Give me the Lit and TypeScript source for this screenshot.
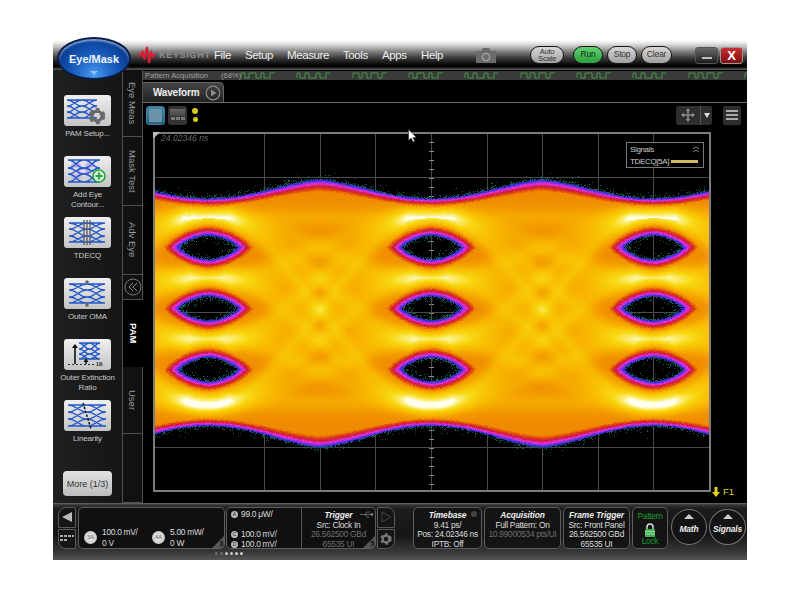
import { LitElement, html, css, svg } from "lit";
import { customElement } from "lit/decorators.js";

const curve = (x0: number, x1: number, a: number, b: number) => {
  const m = (x0 + x1) / 2;
  return `M${x0} ${a}C${m} ${a} ${m} ${b} ${x1} ${b}`;
};
const eyeD = (x0: number, x1: number, ys: number[]) => {
  const m = (x0 + x1) / 2;
  let d = "";
  for (const [p, q] of [[x0, m], [m, x1]]) {
    ys.forEach((a, i) => {
      ys.forEach((b, j) => {
        if (Math.abs(i - j) === 1 || (i === j && (i === 0 || i === ys.length - 1))) d += curve(p, q, a, b);
      });
    });
  }
  return d;
};
const eyePath = (x0: number, x1: number, ys: number[]) =>
  svg`<path d=${eyeD(x0, x1, ys)} fill="none" stroke="#2358c6" stroke-width="1.5"/>`;
const gear = (cx: number, cy: number, r: number, col: string) => svg`
  <circle cx=${cx} cy=${cy} r=${r} fill="none" stroke=${col} stroke-width=${r * 0.55} stroke-dasharray=${`${r * 0.55} ${r * 0.55}`}/>
  <circle cx=${cx} cy=${cy} r=${r * 0.75} fill="none" stroke=${col} stroke-width=${r * 0.5}/>`;

const icons: Record<string, unknown> = {
  setup: svg`${eyePath(3, 33, [5, 11, 17, 23])}${gear(33, 21, 6.5, "#6a6a6a")}`,
  contour: svg`<ellipse cx="12" cy="9" rx="5" ry="3" fill="#c9b5e8"/><ellipse cx="19" cy="15" rx="7" ry="4" fill="#bba4e4"/><ellipse cx="19" cy="15" rx="3" ry="1.6" fill="#e4e2f0"/><ellipse cx="26" cy="9" rx="5" ry="3" fill="#c9b5e8"/><ellipse cx="12" cy="21" rx="5" ry="3" fill="#c9b5e8"/>
    ${eyePath(4, 36, [4, 12, 18, 26])}<circle cx="35" cy="20" r="6" fill="#dfe8df" stroke="#22a83c" stroke-width="1.6"/><path d="M35 16.5v7M31.5 20h7" stroke="#22a83c" stroke-width="2"/>`,
  tdecq: svg`${eyePath(5, 41, [6, 12, 19, 25])}<path d="M20 3v25M23 3v25M26 3v25" stroke="#5a5a62" stroke-width="1.3"/>`,
  oma: svg`${eyePath(5, 41, [6, 12, 19, 25])}<circle cx="23" cy="4" r="1.8" fill="#64666e"/><circle cx="23" cy="27" r="1.8" fill="#64666e"/>`,
  ext: svg`${eyePath(15, 36, [4, 10, 15, 20])}<path d="M11 25V6" stroke="#111" stroke-width="1.6"/><path d="M8 9l3-4 3 4z" fill="#111"/><path d="M22 25v-3" stroke="#111" stroke-width="1.5"/><path d="M19.5 23l2.5-3.5 2.5 3.5z" fill="#111"/><path d="M4 25.5h27" stroke="#333" stroke-dasharray="2 2"/><text x="32" y="27" font-size="5" font-weight="700" font-family="Liberation Sans" fill="#222">1/0</text>`,
  lin: svg`${eyePath(4, 42, [5, 12, 19, 26])}<path d="M19 3l8 26" stroke="#111" stroke-width="1.5" stroke-dasharray="2.5 1.5"/>`,
};

const side = [
  { icon: "setup", label: ["PAM Setup..."] },
  { icon: "contour", label: ["Add Eye", "Contour..."] },
  { icon: "tdecq", label: ["TDECQ"] },
  { icon: "oma", label: ["Outer OMA"] },
  { icon: "ext", label: ["Outer Extinction", "Ratio"] },
  { icon: "lin", label: ["Linearity"] },
];

const wavePath = () => {
  let d = "";
  const pats = [[4, 4, 7, 5, 3, 6, 5], [3, 5, 4, 7, 4, 6, 4], [6, 3, 5, 4, 7, 4, 5]];
  let k = 0;
  for (let g = 98; g < 604; g += 56) {
    const p = pats[k++ % 3];
    let x = g;
    let up = false;
    d += `M${x} 7`;
    for (const w of p) {
      d += up ? `V7` : `V2`;
      up = !up;
      x += w;
      if (x > g + 37) x = g + 37;
      d += `H${x}`;
    }
  }
  return d;
};

const stops: [number, number, number, number][] = [
  [0.03, 22, 110, 78],
  [0.12, 42, 48, 205],
  [0.2, 122, 48, 240],
  [0.3, 240, 48, 208],
  [0.4, 200, 24, 72],
  [0.5, 224, 64, 16],
  [0.6, 240, 138, 0],
  [0.72, 248, 184, 0],
  [0.85, 248, 216, 16],
  [0.95, 251, 239, 128],
  [1, 255, 255, 240],
];
const cmap = (t: number): [number, number, number] => {
  if (t <= stops[0][0]) return [stops[0][1], stops[0][2], stops[0][3]];
  for (let i = 1; i < stops.length; i++) {
    if (t <= stops[i][0]) {
      const a = stops[i - 1], b = stops[i];
      const f = (t - a[0]) / (b[0] - a[0]);
      return [a[1] + (b[1] - a[1]) * f, a[2] + (b[2] - a[2]) * f, a[3] + (b[3] - a[3]) * f];
    }
  }
  return [255, 255, 240];
};

function drawEye(c: HTMLCanvasElement) {
  const W = c.width, H = c.height;
  const ox = 155, oy = 134;
  const g = c.getContext("2d")!;
  g.fillStyle = "#000";
  g.fillRect(0, 0, W, H);
  g.strokeStyle = "#4a4a4a";
  g.lineWidth = 1;
  for (let k = -3; k <= 5; k++) {
    const x = Math.round(431 + 55.6 * k) + 0.5 - ox;
    g.beginPath(); g.moveTo(x, 0); g.lineTo(x, H); g.stroke();
  }
  for (let k = 1; k < 8; k++) {
    const y = 132 + 45 * k + 0.5 - oy;
    g.beginPath(); g.moveTo(0, y); g.lineTo(W, y); g.stroke();
  }
  g.fillStyle = "#8a8a8a";
  for (let y = 133; y < 492; y += 9) g.fillRect(429 - ox, y - oy, 5, 1);

  const img = g.getImageData(0, 0, W, H);
  const px = img.data;
  let seed = 12345;
  const rnd = () => {
    seed |= 0; seed = (seed + 0x6d2b79f5) | 0;
    let t = Math.imul(seed ^ (seed >>> 15), 1 | seed);
    t = (t + Math.imul(t ^ (t >>> 7), 61 | t)) ^ t;
    return ((t ^ (t >>> 14)) >>> 0) / 4294967296;
  };
  const P = 222.5, X0 = 208;
  const L = [217, 278, 339, 402];
  const LA = [0.24, 0.1, 0.1, 0.24];
  const eyesY = [247, 308, 369];
  const eyesX = [208, 431, 653];
  for (let iy = 0; iy < H; iy++) {
    const y = iy + oy;
    for (let ix = 0; ix < W; ix++) {
      const x = ix + ox;
      const u = (((x - X0) % P) + P) % P / P;
      const cs = Math.pow(Math.abs(Math.cos(Math.PI * u)), 1.5);
      const top = 179 + 19 * cs;
      const bot = 447 - 21.5 * cs;
      let d = Math.min(y - top, bot - y);
      let scale = 20 - 8 * cs;
      for (const ex of eyesX) {
        if (Math.abs(x - ex) > 90) continue;
        for (const ey of eyesY) {
          const dx = Math.abs(x - ex) / 29, dy = Math.abs(y - ey) / 12;
          const r = Math.pow(dx, 1.7) + Math.pow(dy, 1.3);
          const de = (r - 1) * 9;
          if (de < d) { d = de; scale = 16; }
        }
      }
      const n = (rnd() - 0.5) * 1.5;
      const dn = d + n;
      const i = (iy * W + ix) * 4;
      if (dn < 0) {
        const p = Math.exp(dn / 1.6) * 0.7;
        if (rnd() < p) {
          const col = rnd() < 0.3 && dn > -1.5 ? [40, 60, 190] : [24, 120, 88];
          const a = 0.55 + rnd() * 0.4;
          px[i] = col[0] * a; px[i + 1] = col[1] * a; px[i + 2] = col[2] * a;
        }
        continue;
      }
      const ramp = 0.08 + 1.15 * (1 - Math.exp(-dn / scale));
      let sum = 0;
      const ss = 0.5 - 0.5 * Math.cos(Math.PI * u);
      for (let a = 0; a < 4; a++) {
        for (let b = 0; b < 4; b++) {
          const ty = L[a] + (L[b] - L[a]) * ss;
          const e = (y - ty) / 11;
          sum += Math.exp(-e * e);
        }
      }
      const bb = Math.min(sum / 4, 1);
      let spot = 0;
      for (const ex of eyesX) {
        const ex2 = (x - ex + 2) / 27;
        if (Math.abs(ex2) > 4) continue;
        for (let a = 0; a < 4; a++) {
          const e2 = (y - L[a]) / 9;
          spot += LA[a] * Math.exp(-ex2 * ex2 - e2 * e2);
        }
      }
      const body = 0.6 + 0.3 * bb + spot + (rnd() - 0.5) * 0.012;
      const t = Math.min(ramp, body);
      const [r, gg, bl] = cmap(t);
      px[i] = r; px[i + 1] = gg; px[i + 2] = bl;
    }
  }
  g.putImageData(img, 0, 0);
}

@customElement("app-root")
export class AppRoot extends LitElement {
  static styles = css`
    :host { display: block; width: 800px; height: 600px; background: #fff; padding: 40px 53px 0; box-sizing: border-box; font-family: "Liberation Sans", Arial, sans-serif; overflow: hidden; position: relative; }
    .win { width: 694px; height: 520px; display: flex; flex-direction: column; background: #000; position: relative; }
    .top { height: 30px; flex: none; display: flex; align-items: center; padding: 0 4px 0 85px; box-sizing: border-box; color: #eee;
      background: linear-gradient(#fff 0, #e8e8e8 3px, #bdbdbd 7px, #7a7a7a 12px, #3a3a3a 18px, #0c0c0c 24px, #000 27px, #333 28px, #5a5a5a 30px); }
    .orb { position: absolute; left: 4px; top: -3px; width: 74px; height: 43px; border-radius: 50%; box-sizing: border-box; border: 2px solid #0a1d45; background: radial-gradient(ellipse at 50% 95%, #4c9cf0 0, #1f66c8 35%, #0e46a0 65%, #062c72 100%); display: flex; align-items: center; justify-content: center; color: #eef4ff; font-weight: 700; font-size: 11px; overflow: hidden; z-index: 3; box-shadow: inset 0 2px 2px #7f9fd0; }
    .orb::after { content: ""; position: absolute; left: 31px; bottom: 3px; width: 0; height: 0; border: 4px solid transparent; border-top: 4px solid #8fc2f5; border-bottom: 0; }
    .logo { width: 18px; height: 18px; flex: none; }
    .brand { font-size: 9px; letter-spacing: .7px; color: #8e8e8e; margin: 0 10px 0 3px; width: 45px; white-space: nowrap; font-weight: 700; }
    .menu { display: flex; font-size: 11.5px; letter-spacing: -.4px; white-space: nowrap; }
    .menu span { display: block; }
    .mi1 { width: 31px; } .mi2 { width: 42px; } .mi3 { width: 56px; } .mi4 { width: 39px; } .mi5 { width: 39px; } .mi6 { width: 33px; }
    .cam { width: 22px; height: 17px; margin-left: 21px; flex: none; }
    .pills { display: flex; margin-left: 33px; gap: 4px; }
    .pill { height: 18px; border-radius: 9px; border: 1px solid #161616; box-sizing: border-box; background: linear-gradient(#d8d8d8, #a0a0a0); color: #333; font-size: 8.5px; letter-spacing: -.2px; display: flex; align-items: center; justify-content: center; text-align: center; line-height: 7.5px; width: 30px; }
    .pill.auto { width: 34px; margin-right: 5px; font-size: 7.5px; }
    .pill.run { background: linear-gradient(#62d070, #2da040); color: #05320f; }
    .pill.clr { width: 31px; }
    .wbtns { display: flex; margin-left: 23px; gap: 2px; }
    .wb { width: 23px; height: 17px; border-radius: 3px; box-sizing: border-box; display: flex; align-items: center; justify-content: center; }
    .wb.min { background: linear-gradient(#6a6a6a, #1c1c1c); border: 1px solid #555; }
    .wb.min i { display: block; width: 10px; height: 2px; background: #bbb; margin-top: 5px; }
    .wb.close { background: linear-gradient(#c83030, #801010); border: 1px solid #999; color: #fff; font-weight: 700; font-size: 13px; }
    .body { flex: 1; min-height: 0; display: flex; }
    .side { width: 69px; flex: none; background: linear-gradient(90deg, #202020, #151515); display: flex; flex-direction: column; align-items: center; padding-top: 25px; box-sizing: border-box; }
    .sb { height: 61px; display: flex; flex-direction: column; align-items: center; color: #c8c8c8; font-size: 8px; letter-spacing: -.15px; line-height: 10px; text-align: center; white-space: nowrap; }
    .ib { width: 47px; height: 31px; border-radius: 3px; background: linear-gradient(#efefef, #c4c4c4); margin-bottom: 3px; flex: none; }
    .ib svg { display: block; }
    .more { width: 49px; height: 25px; border-radius: 4px; background: linear-gradient(#e2e2e2, #bcbcbc); color: #333; font-size: 9px; display: flex; align-items: center; justify-content: center; margin-top: 10px; }
    .tabs { width: 21px; flex: none; display: flex; flex-direction: column; background: #111; }
    .tab { box-sizing: border-box; border: 1px solid #505050; border-top: 0; writing-mode: vertical-rl; display: flex; align-items: center; justify-content: center; color: #9a9a9a; font-size: 9.5px; white-space: nowrap; width: 21px; }
    .tab.h66 { height: 67px; } .tab.h69 { height: 69px; }
    .tab.col { height: 25px; writing-mode: horizontal-tb; }
    .tab.col svg { display: block; }
    .tab.act { height: 67px; border-right: 0; border-bottom: 0; color: #fff; font-weight: 700; background: #000; }
    .tab.fill { flex: 1; }
    .main { flex: 1; min-width: 0; display: flex; flex-direction: column; background: #000; }
    .status { height: 9px; margin-top: 1px; flex: none; background: #3a3a3a; position: relative; display: flex; align-items: center; color: #a0a0a0; font-size: 7.6px; white-space: nowrap; padding-left: 2px; }
    .status .pct { margin-left: 13px; }
    .status svg { position: absolute; left: 0; top: 0; }
    .tabrow { height: 20px; margin-top: 2px; flex: none; border-bottom: 1px solid #6a6a6a; box-sizing: content-box; display: flex; }
    .wtab { width: 81px; height: 20px; box-sizing: border-box; background: linear-gradient(#444, #222); border-top: 1px solid #666; border-right: 1px solid #666; border-radius: 0 5px 0 0; color: #f0f0f0; font-size: 10px; font-weight: 700; display: flex; align-items: center; padding-left: 10px; justify-content: space-between; padding-right: 2px; letter-spacing: -.2px; }
    .tools { height: 20px; margin-top: 2px; flex: none; display: flex; align-items: center; padding: 0 6px 0 3px; }
    .bl { width: 19px; height: 19px; border-radius: 3px; background: linear-gradient(#3f88a8, #26607e); border: 1px solid #3a7a9c; box-sizing: border-box; display: flex; align-items: center; justify-content: center; }
    .bl i { display: block; width: 13px; height: 13px; background: #6c92a8; border-radius: 1px; }
    .gr { width: 19px; height: 19px; border-radius: 3px; background: #333; margin-left: 3px; display: flex; flex-direction: column; align-items: center; padding-top: 3px; box-sizing: border-box; gap: 1px; }
    .gr b { display: block; width: 15px; height: 7px; background: linear-gradient(#666, #444); }
    .gr u { display: flex; gap: 1px; }
    .gr u s { display: block; width: 4px; height: 3px; background: #777; }
    .leds { display: flex; flex-direction: column; align-items: center; margin-left: 5px; gap: 3px; }
    .leds i { display: block; background: #d8c81c; border-radius: 50%; }
    .leds .a { width: 6px; height: 6px; } .leds .b { width: 5px; height: 5px; }
    .gap { flex: 1; }
    .mv { width: 36px; height: 19px; background: #2e2e2e; border-radius: 2px; display: flex; align-items: center; }
    .mv svg { display: block; margin-left: 5px; }
    .mv .dd { margin-left: 5px; border-left: 1px solid #555; height: 19px; flex: 1; display: flex; align-items: center; justify-content: center; }
    .mv .dd i { display: block; width: 0; height: 0; border: 3px solid transparent; border-top: 5px solid #ddd; border-bottom: 0; }
    .hb { width: 18px; height: 19px; background: #2e2e2e; border-radius: 2px; margin-left: 11px; display: flex; flex-direction: column; align-items: center; justify-content: center; gap: 2px; }
    .hb i { display: block; width: 12px; height: 2px; background: #aaa; }
    .plotwrap { margin: 7px 0 0 10px; position: relative; width: 558px; height: 360px; flex: none; }
    .plot { width: 558px; height: 360px; box-sizing: border-box; border: 2px solid #7c7c7c; background: #000; }
    canvas { display: block; filter: blur(.45px); }
    .ts { position: absolute; left: 8px; top: 1px; color: #6a6a6a; font-style: italic; font-size: 8.6px; }
    .corner { position: absolute; left: 0; top: 0; width: 0; height: 0; border-top: 7px solid #bbb; border-right: 7px solid transparent; }
    .legend { position: absolute; left: 473px; top: 10px; width: 78px; height: 26px; box-sizing: border-box; border: 1px solid #7a7a7a; background: #000; color: #ccc; font-size: 8px; padding: 1px 3px; line-height: 11.5px; letter-spacing: -.35px; }
    .legend div { display: flex; align-items: center; justify-content: space-between; white-space: nowrap; }
    .legend i { display: block; width: 27px; height: 3px; background: #cdbb62; margin-right: 2px; }
    .f1 { position: absolute; left: 559px; top: 354px; color: #e0d020; font-size: 9.5px; white-space: nowrap; display: flex; align-items: center; gap: 3px; }
    .f1 svg { display: block; }
    .bot { height: 57px; flex: none; display: flex; padding: 4px 0 0 5px; box-sizing: border-box; background: linear-gradient(#6a6a6a 0, #333 2px, #1c1c1c 6px, #161616 32px, #3a3a3a 50px, #555 57px); color: #ddd; font-size: 8.4px; letter-spacing: -.28px; }
    .leftg { display: flex; flex-direction: column; width: 337px; flex: none; }
    .lrow { display: flex; height: 42px; }
    .nav { display: flex; flex-direction: column; gap: 1px; width: 18px; flex: none; }
    .nav div { height: 20.5px; box-sizing: border-box; border: 1px solid #5a5a5a; background: #151515; display: flex; align-items: center; justify-content: center; }
    .nav .t { border-radius: 8px 2px 0 0; }
    .nav .b { border-radius: 0 0 2px 8px; }
    .nav.r .t { border-radius: 2px 8px 0 0; }
    .nav.r .b { border-radius: 0 0 8px 2px; }
    .nav svg { display: block; }
    .pan { position: relative; border: 1px solid #5e5e5e; border-radius: 5px; box-sizing: border-box; height: 42px; background: #101010; white-space: nowrap; }
    .p1 { width: 147px; margin: 0 1px 0 2px; display: flex; padding: 19px 0 0 5px; }
    .ch { display: flex; align-items: center; gap: 5px; line-height: 11px; }
    .ch.one { width: 68px; }
    .cb { width: 13px; height: 13px; border-radius: 50%; background: radial-gradient(#eee, #bbb); color: #555; font-size: 5.5px; display: flex; align-items: center; justify-content: center; flex: none; letter-spacing: 0; }
    .p2 { width: 150px; margin-right: 1px; display: flex; }
    .p2l { width: 75px; padding: 1px 0 0 4px; box-sizing: border-box; border-right: 1px solid #555; }
    .p2l div { display: flex; align-items: center; gap: 3px; height: 10px; }
    .p2l div.sp { margin-bottom: 10px; }
    .sm { width: 7px; height: 7px; border-radius: 50%; background: #bbb; color: #222; font-size: 5px; display: flex; align-items: center; justify-content: center; letter-spacing: 0; }
    .p2r { flex: 1; text-align: center; padding-top: 3px; line-height: 9.5px; position: relative; }
    .ttl { font-weight: 700; font-style: italic; color: #eee; font-size: 8.4px; letter-spacing: -.1px; }
    .dim { color: #6e6e6e; }
    .tri { position: absolute; right: 0; bottom: 0; width: 0; height: 0; border-bottom: 12px solid #555; border-left: 12px solid transparent; border-bottom-right-radius: 4px; }
    .tn { position: absolute; right: 1px; bottom: 0; font-size: 7px; color: #111; font-weight: 700; line-height: 8px; }
    .usb { position: absolute; right: 1px; top: 3px; display: block; }
    .dots { display: flex; gap: 2px; justify-content: center; margin: 3px 0 0 4px; }
    .dots i { display: block; width: 3px; height: 3px; border-radius: 50%; background: #ccc; }
    .dots i.o { background: none; border: .5px solid #888; box-sizing: border-box; }
    .rb { display: flex; margin-left: 18px; gap: 2px; height: 42px; }
    .box { box-sizing: border-box; height: 42px; border: 1px solid #5e5e5e; border-radius: 5px; background: #141414; text-align: center; line-height: 9.6px; padding-top: 3px; white-space: nowrap; position: relative; }
    .b1 { width: 69px; } .b2 { width: 77px; } .b3 { width: 67px; } .b4 { width: 36px; color: #1d9a2c; padding-top: 4px; }
    .b4 svg { display: block; margin: 1px auto 0; }
    .led { position: absolute; right: 4px; top: 3px; width: 6px; height: 6px; border-radius: 50%; background: #444; }
    .circ { width: 36px; height: 36px; margin-top: 2px; border-radius: 50%; border: 1px solid #777; background: #141414; box-sizing: border-box; display: flex; flex-direction: column; align-items: center; color: #eee; font-weight: 700; font-style: italic; font-size: 8.4px; letter-spacing: -.1px; padding-top: 4px; gap: 5px; flex: none; }
    .circ i { display: block; width: 0; height: 0; border: 5px solid transparent; border-bottom: 5px solid #ccc; border-top: 0; }
    .circ.m { margin-left: 1px; } 
    .circ.s { width: 37px; margin-left: 0; }
    .cursor { position: absolute; left: 408px; top: 129px; z-index: 4; display: block; }
  `;

  firstUpdated() {
    const c = this.renderRoot.querySelector("canvas") as HTMLCanvasElement;
    drawEye(c);
  }

  render() {
    return html`
      <div class="win">
        <div class="orb">Eye/Mask</div>
        <div class="top">
          <svg class="logo" viewBox="0 0 18 18"><path d="M0 9.5h2.5l2-3.5 2 7.5L9 1l2.2 16 2-10.5 1.7 4 1-1.5H18" fill="none" stroke="#e01830" stroke-width="1.9"/></svg>
          <div class="brand">KEYSIGHT</div>
          <div class="menu"><span class="mi1">File</span><span class="mi2">Setup</span><span class="mi3">Measure</span><span class="mi4">Tools</span><span class="mi5">Apps</span><span class="mi6">Help</span></div>
          <svg class="cam" viewBox="0 0 22 17"><path d="M1 4h5l2-3h6l2 3h5v12H1z" fill="#6b6b6b"/><circle cx="11" cy="10" r="3.6" fill="none" stroke="#a8a8a8" stroke-width="1.3"/></svg>
          <div class="pills">
            <div class="pill auto">Auto<br />Scale</div>
            <div class="pill run">Run</div>
            <div class="pill">Stop</div>
            <div class="pill clr">Clear</div>
          </div>
          <div class="wbtns">
            <div class="wb min"><i></i></div>
            <div class="wb close">X</div>
          </div>
        </div>
        <div class="body">
          <div class="side">
            ${side.map((s) => html`
              <div class="sb">
                <div class="ib"><svg width="47" height="31" viewBox="0 0 47 31">${icons[s.icon]}</svg></div>
                ${s.label.map((l) => html`<div>${l}</div>`)}
              </div>`)}
            <div class="more">More (1/3)</div>
          </div>
          <div class="tabs">
            <div class="tab h66">Eye Meas</div>
            <div class="tab h69">Mask Test</div>
            <div class="tab h69">Adv Eye</div>
            <div class="tab col"><svg width="18" height="18" viewBox="0 0 18 18"><circle cx="9" cy="9" r="8" fill="none" stroke="#777"/><path d="M9 5l-4 4 4 4M13 5l-4 4 4 4" fill="none" stroke="#888"/></svg></div>
            <div class="tab act">PAM</div>
            <div class="tab h66">User</div>
            <div class="tab fill"></div>
          </div>
          <div class="main">
            <div class="status">
              <span>Pattern Acquisition</span><span class="pct">(68%)</span>
              <svg width="604" height="9" viewBox="0 0 604 9"><path d=${wavePath()} fill="none" stroke="#3f9a45" stroke-width="1"/></svg>
            </div>
            <div class="tabrow">
              <div class="wtab">Waveform
                <svg width="16" height="16" viewBox="0 0 16 16"><circle cx="8" cy="8" r="6.8" fill="none" stroke="#8c8c8c" stroke-width="1.2"/><path d="M6 4.5l5.5 3.5-5.5 3.5z" fill="#8c8c8c"/></svg>
              </div>
            </div>
            <div class="tools">
              <div class="bl"><i></i></div>
              <div class="gr"><b></b><u><s></s><s></s><s></s></u></div>
              <div class="leds"><i class="a"></i><i class="b"></i></div>
              <div class="gap"></div>
              <div class="mv">
                <svg width="14" height="14" viewBox="0 0 14 14"><path d="M7 0l2 3H5zM7 14l-2-3h4zM0 7l3-2v4zM14 7l-3 2V5z" fill="#999"/><path d="M6 3h2v3h3v2H8v3H6V8H3V6h3z" fill="#777"/></svg>
                <div class="dd"><i></i></div>
              </div>
              <div class="hb"><i></i><i></i><i></i></div>
            </div>
            <div class="plotwrap">
              <div class="plot"><canvas width="554" height="356"></canvas></div>
              <div class="corner"></div>
              <div class="ts">24.02346 ns</div>
              <div class="legend">
                <div><span>Signals</span><svg width="8" height="7" viewBox="0 0 8 7"><path d="M1 3l3-2 3 2M1 6l3-2 3 2" fill="none" stroke="#888"/></svg></div>
                <div><span>TDECQ[5A]</span><i></i></div>
              </div>
              <div class="f1"><svg width="8" height="10" viewBox="0 0 8 10"><path d="M2.5 0h3v5H8L4 10 0 5h2.5z" fill="#e0d020"/></svg>F1</div>
            </div>
          </div>
        </div>
        <div class="bot">
          <div class="leftg">
            <div class="lrow">
              <div class="nav">
                <div class="t"><svg width="12" height="12" viewBox="0 0 12 12"><path d="M11 1v10L1 6z" fill="#bbb"/></svg></div>
                <div class="b"><svg width="14" height="9" viewBox="0 0 14 9"><path d="M0 1h3v2H0zM4 1h3v2H4zM8 1h3v2H8zM12 1h2v2h-2zM0 5h3v2H0zM4 5h3v2H4z" fill="#aaa"/></svg></div>
              </div>
              <div class="pan p1">
                <div class="ch one"><div class="cb">3A</div><div>100.0 mV/<br />0 V</div></div>
                <div class="ch"><div class="cb">4A</div><div>5.00 mW/<br />0 W</div></div>
                <div class="tri"></div><div class="tn">3</div>
              </div>
              <div class="pan p2">
                <div class="p2l">
                  <div class="sp"><span class="sm">A</span>99.0 μW/</div>
                  <div><span class="sm">C</span>100.0 mV/</div>
                  <div><span class="sm">D</span>100.0 mV/</div>
                </div>
                <div class="p2r">
                  <div class="ttl">Trigger</div>
                  <div>Src: Clock In</div>
                  <div class="dim">26.562500 GBd</div>
                  <div class="dim">65535 UI</div>
                  <svg class="usb" width="14" height="7" viewBox="0 0 14 7"><path d="M0 3.5h11M5 3.5L7 1h3M5 3.5L7 6h2" fill="none" stroke="#777" stroke-width=".8"/><circle cx="12" cy="3.5" r="1.4" fill="#777"/></svg>
                  <div class="tri"></div><div class="tn">5</div>
                </div>
              </div>
              <div class="nav r">
                <div class="t"><svg width="12" height="12" viewBox="0 0 12 12"><path d="M2 1v10l9-5z" fill="none" stroke="#444"/></svg></div>
                <div class="b"><svg width="14" height="14" viewBox="0 0 14 14">${gear(7, 7, 4.5, "#777")}</svg></div>
              </div>
            </div>
            <div class="dots"><i class="o"></i><i class="o"></i><i></i><i></i><i></i><i></i></div>
          </div>
          <div class="rb">
            <div class="box b1"><div class="ttl">Timebase</div><div>9.41 ps/</div><div>Pos: 24.02346 ns</div><div>IPTB: Off</div><span class="led"></span></div>
            <div class="box b2"><div class="ttl">Acquisition</div><div>Full Pattern: On</div><div class="dim">10.99000534 pts/UI</div></div>
            <div class="box b3"><div class="ttl">Frame Trigger</div><div>Src: Front Panel</div><div>26.562500 GBd</div><div>65535 UI</div></div>
            <div class="box b4">Pattern
              <svg width="12" height="14" viewBox="0 0 12 14"><path d="M3 6V4a3 3 0 0 1 6 0v2" fill="none" stroke="#ddd" stroke-width="1.5"/><rect x="1" y="6" width="10" height="8" rx="1" fill="#3fae4c"/><path d="M1 8.5h10M1 11h10" stroke="#bfe8c4" stroke-width=".8"/></svg>
              Lock
            </div>
            <div class="circ m"><i></i>Math</div>
            <div class="circ s"><i></i>Signals</div>
          </div>
        </div>
      </div>
      <svg class="cursor" width="9" height="14" viewBox="0 0 9 14"><path d="M0.5 0.5v11l2.7-2.5 1.8 4 1.8-.8-1.8-3.8H8.5z" fill="#fff" stroke="#222" stroke-width=".6"/></svg>
    `;
  }
}
